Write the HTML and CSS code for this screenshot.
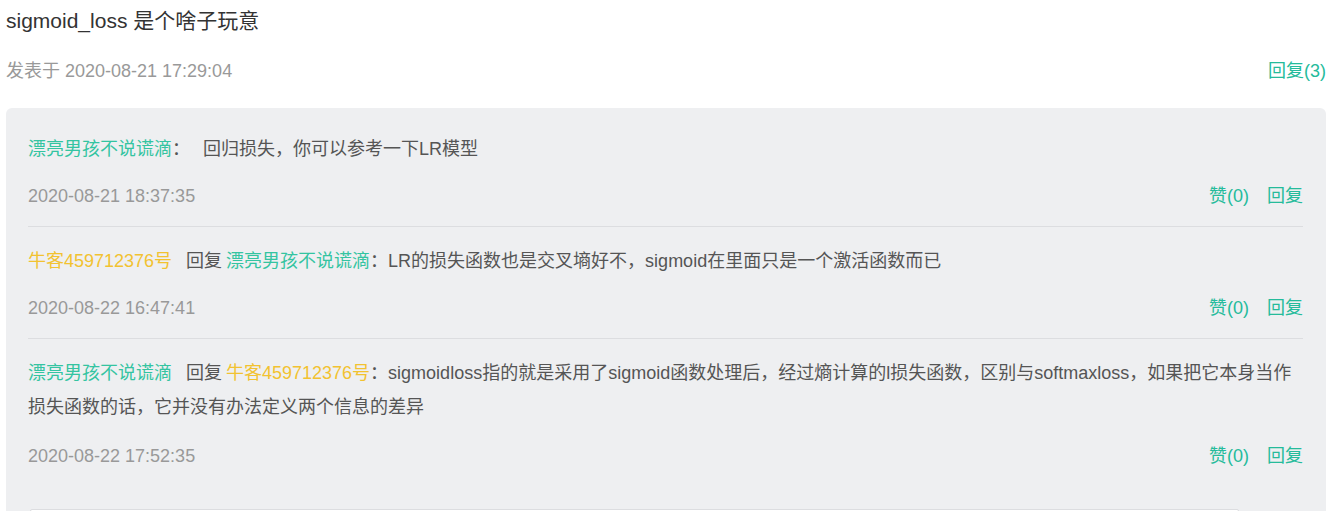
FILE: index.html
```html
<!doctype html>
<html lang="zh-CN">
<head>
<meta charset="utf-8">
<meta name="viewport" content="width=device-width, initial-scale=1.0">
<title>sigmoid_loss 是个啥子玩意</title>
<link rel="stylesheet" href="styles.css">
</head>
<body>
	<div class="post">
		<h1 class="post-title">sigmoid_loss 是个啥子玩意</h1>
		<div class="post-meta">
			<span class="meta-time">发表于 2020-08-21 17:29:04</span>
			<a class="link" href="#">回复(3)</a>
		</div>

		<div class="reply-box">
			<div class="reply">
				<p class="reply-text"><a class="user green" href="#">漂亮男孩不说谎滴</a><span class="colon">：</span>回归损失，你可以参考一下LR模型</p>
				<div class="reply-foot">
					<span class="reply-time">2020-08-21 18:37:35</span>
					<span class="actions"><a class="link" href="#">赞(0)</a><a class="link" href="#">回复</a></span>
				</div>
			</div>
			<div class="reply">
				<p class="reply-text"><a class="user yellow" href="#">牛客459712376号</a><span class="to">回复</span><a class="user green" href="#">漂亮男孩不说谎滴</a>：LR的损失函数也是交叉墒好不，sigmoid在里面只是一个激活函数而已</p>
				<div class="reply-foot">
					<span class="reply-time">2020-08-22 16:47:41</span>
					<span class="actions"><a class="link" href="#">赞(0)</a><a class="link" href="#">回复</a></span>
				</div>
			</div>
			<div class="reply last">
				<p class="reply-text"><a class="user green" href="#">漂亮男孩不说谎滴</a><span class="to">回复</span><a class="user yellow" href="#">牛客459712376号</a>：sigmoidloss指的就是采用了sigmoid函数处理后，经过熵计算的l损失函数，区别与softmaxloss，如果把它本身当作损失函数的话，它并没有办法定义两个信息的差异</p>
				<div class="reply-foot">
					<span class="reply-time">2020-08-22 17:52:35</span>
					<span class="actions"><a class="link" href="#">赞(0)</a><a class="link" href="#">回复</a></span>
				</div>
			</div>
			<div class="reply-form">
				<div class="reply-input"></div>
			</div>
		</div>
	</div>
</body>
</html>
```

FILE: styles.css
```css
	body, html {
		margin: 0;
		background: #fff;
	}
	body {
		font-family: "Liberation Sans", Arial, "Noto Sans CJK SC", sans-serif;
		color: #333;
	}

	/* links */
	a:link, a:visited, a:hover, a:active {
		text-decoration: none;
		color: inherit;
	}
	.link {
		color: #25bb9b !important;
	}
	.green {
		color: #34c4a1 !important;
	}
	.yellow {
		color: #f2c230 !important;
	}

	/* post header */
	.post {
		width: 1320px;
		padding: 6px 0 0 6px;
	}
	.post-title {
		margin: 0;
		font-size: 21px;
		font-weight: normal;
		line-height: 30px;
		color: #333;
	}
	.post-meta {
		display: flex;
		justify-content: space-between;
		margin-top: 20px;
		font-size: 18px;
		line-height: 30px;
	}
	.meta-time {
		color: #999;
	}

	/* replies */
	.reply-box {
		margin-top: 22px;
		padding: 7px 23px 0 22px;
		background: #eeeff1;
		border-radius: 6px;
		height: 420px;
	}
	.reply {
		padding: 17px 0 13px;
		border-bottom: 1px solid #dcdde0;
	}
	.reply.last {
		border-bottom: none;
		padding-bottom: 16px;
	}
	.reply-text {
		margin: 0;
		font-size: 18px;
		line-height: 34px;
		color: #555;
	}
	.colon {
		margin-right: 13px;
	}
	.to {
		margin: 0 4px 0 14px;
	}
	.reply-foot {
		display: flex;
		justify-content: space-between;
		margin-top: 13px;
		font-size: 18px;
		line-height: 34px;
	}
	.reply.last .reply-foot {
		margin-top: 15px;
	}
	.reply-time {
		color: #999;
	}
	.actions {
		display: flex;
		gap: 18px;
	}

	/* reply input, cut off by the window */
	.reply-form {
		padding: 20px 0 0 2px;
	}
	.reply-input {
		width: 1207px;
		height: 60px;
		background: #fff;
		border: 1px solid #dcdde0;
		border-radius: 2px;
	}
```
